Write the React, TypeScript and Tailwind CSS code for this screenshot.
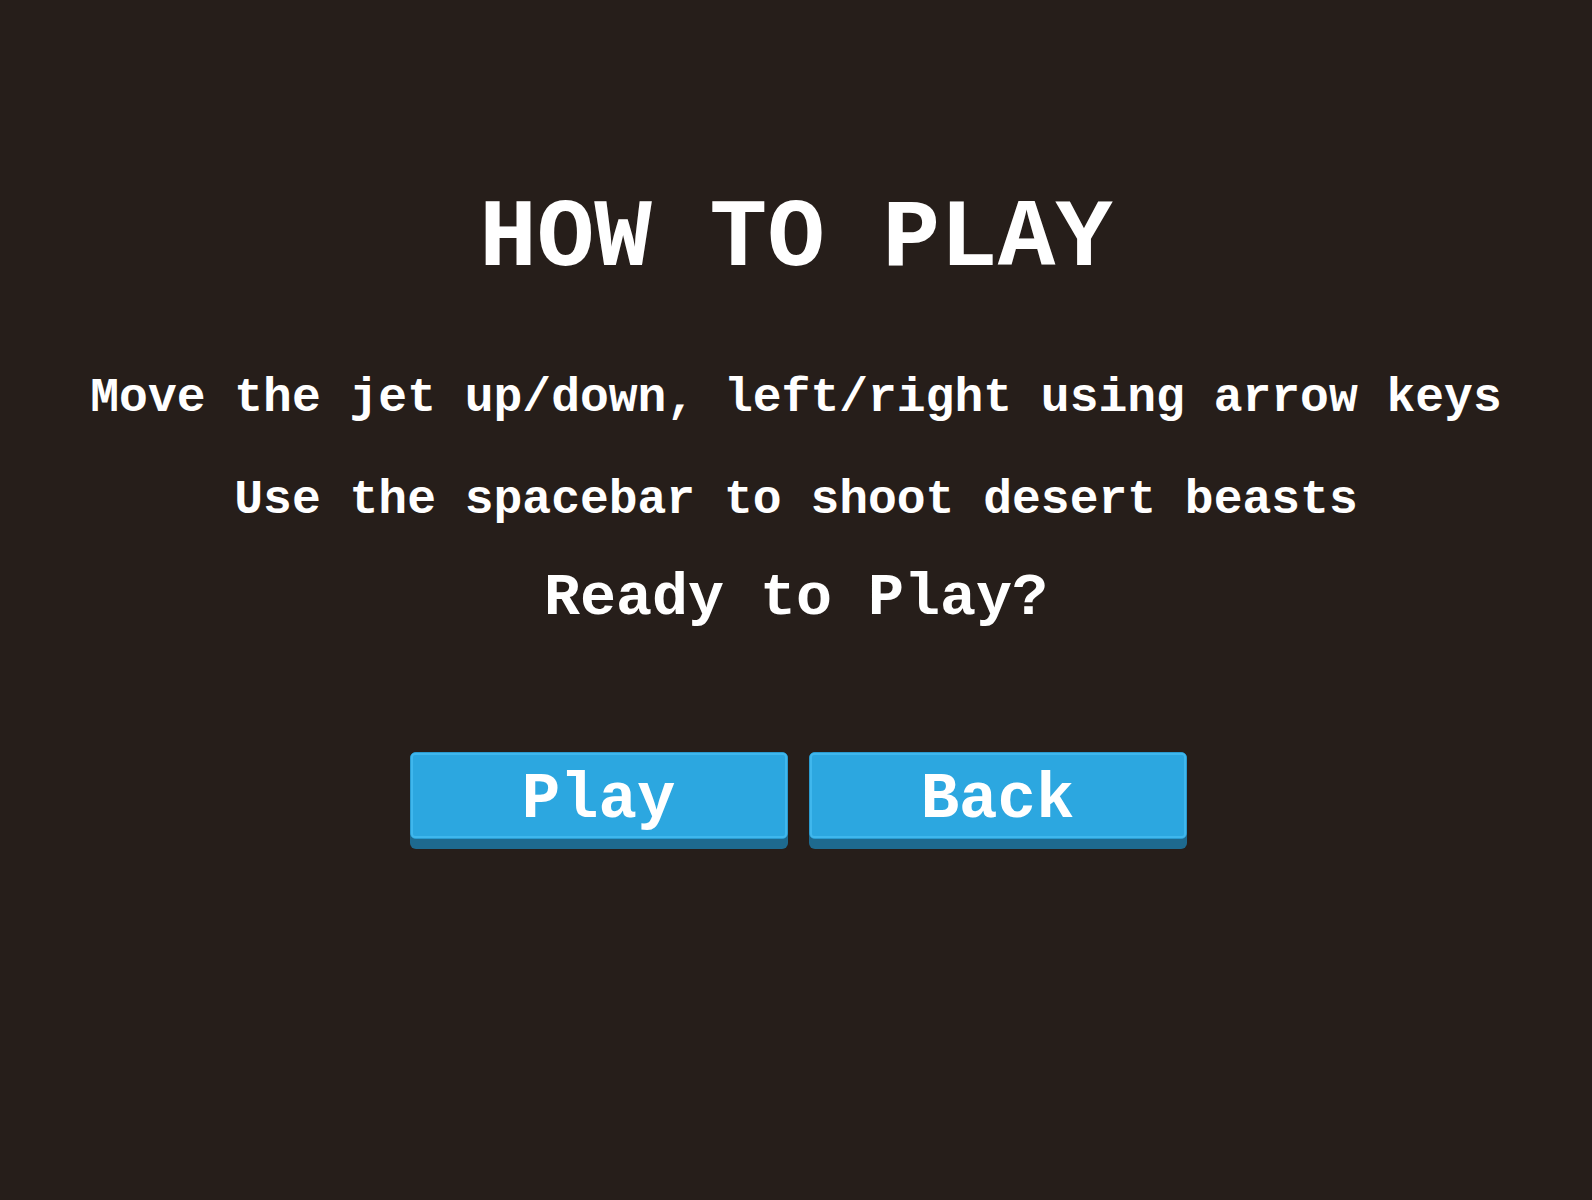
import React from "react";

function GameButton({ label }: { label: string }) {
  return (
    <div className="w-[378px] h-[97px] rounded-[6px] bg-[#1e6a8f] pb-[10px] cursor-pointer">
      <div className="h-full rounded-[6px] border border-[#2a9bd0] bg-[#2a9bd0]">
        <div className="h-full rounded-[4px] border-2 border-[#3fb7ed] bg-[#2ca7e0] flex justify-center pt-[13px]">
          <span className="text-[64px] leading-none font-bold text-white">{label}</span>
        </div>
      </div>
    </div>
  );
}

export default function App() {
  return (
    <div
      className="w-full h-[1200px] bg-[#261e1a] flex flex-col items-center text-white"
      style={{ fontFamily: '"Liberation Mono", "Courier New", monospace' }}
    >
      <h1 className="mt-[192px] text-[96px] leading-none font-bold whitespace-pre">HOW TO PLAY</h1>
      <p className="mt-[86px] text-[48px] leading-none font-bold whitespace-pre">
        Move the jet up/down, left/right using arrow keys
      </p>
      <p className="mt-[54px] text-[48px] leading-none font-bold whitespace-pre">
        Use the spacebar to shoot desert beasts
      </p>
      <p className="mt-[44px] text-[60px] leading-none font-bold whitespace-pre">Ready to Play?</p>
      <div className="mt-[124px] flex gap-[21px] ml-[4px]">
        <GameButton label="Play" />
        <GameButton label="Back" />
      </div>
    </div>
  );
}
